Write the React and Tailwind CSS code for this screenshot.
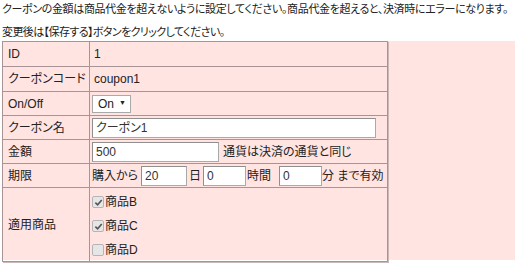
import React from 'react'

const font = { fontFamily: '"Liberation Sans", "Noto Sans CJK JP", sans-serif', fontFeatureSettings: '"palt"' }

const Check = ({ checked }) => (
  <span className="inline-flex items-center justify-center w-[12px] h-[12px] mr-[1px] border border-[#b5b5b5] bg-[#e6e6e6] rounded-[2px]">
    {checked && (
      <svg width="9" height="9" viewBox="0 0 10 10">
        <path d="M1.5 5.2 L4 7.6 L8.6 2.2" fill="none" stroke="#555" strokeWidth="1.8" />
      </svg>
    )}
  </span>
)

const Input = ({ value, w }) => (
  <span className={`inline-block h-[20px] leading-[18px] border border-[#a9a9a9] border-t-[#8f8f8f] border-l-[#8f8f8f] bg-white pl-[3px] text-[12px] text-[#333] align-middle ${w}`}>
    {value}
  </span>
)

const rows = [
  { label: 'ID', h: 'h-[25px]', value: <span className="pl-[2px]">1</span> },
  { label: 'クーポンコード', h: 'h-[25px]', value: <span className="pl-[2px]">coupon1</span> },
  {
    label: 'On/Off',
    h: 'h-[24px]',
    value: (
      <span className="inline-flex items-center h-[18px] border border-[#a9a9a9] bg-white pl-[5px] pr-[4px] gap-[5px] text-[12px]">
        On <span className="text-[7px]">▼</span>
      </span>
    ),
  },
  { label: 'クーポン名', h: 'h-[24px]', value: <Input value="クーポン1" w="w-[284px]" /> },
  {
    label: '金額',
    h: 'h-[24px]',
    value: (
      <span className="flex items-center gap-[4px]">
        <Input value="500" w="w-[127px]" />
        <span>通貨は決済の通貨と同じ</span>
      </span>
    ),
  },
  {
    label: '期限',
    h: 'h-[24px]',
    value: (
      <span className="flex items-center whitespace-nowrap">
        <span className="mr-[3px]">購入から</span>
        <Input value="20" w="w-[46px]" />
        <span className="mx-[2px]">日</span>
        <Input value="0" w="w-[43px]" />
        <span className="ml-[1px] mr-[8px]">時間</span>
        <Input value="0" w="w-[43px]" />
        <span>分 まで有効</span>
      </span>
    ),
  },
]

export default function App() {
  return (
    <div className="w-[518px] h-[265px] bg-white text-[12px] text-[#222]" style={font}>
      <p className="pl-[2px] pt-[2px] text-[11px] leading-[14px] whitespace-nowrap tracking-[-0.35px]">
        クーポンの金額は商品代金を超えないように設定してください。商品代金を超えると、決済時にエラーになります。
      </p>
      <p className="pl-[2px] mt-[9px] text-[11px] leading-[14px] whitespace-nowrap tracking-[-0.6px]">
        変更後は【保存する】ボタンをクリックしてください。
      </p>
      <div className="mt-[2px] ml-[2px] w-[513px] h-[219px] bg-[#ffe4e1]">
        <table className="w-[386px] border-collapse border border-[#a89494] shadow-[1px_1px_0_#cbb8b8]">
          <tbody>
            {rows.map((r) => (
              <tr key={r.label} className={r.h}>
                <td className="w-[87px] border border-[#a89494] pl-[5px] py-0 whitespace-nowrap">{r.label}</td>
                <td className="border border-[#a89494] pl-[2px] py-0">{r.value}</td>
              </tr>
            ))}
            <tr className="h-[70px]">
              <td className="w-[87px] border border-[#a89494] pl-[5px]">適用商品</td>
              <td className="border border-[#a89494] pl-[2px]">
                <div className="flex flex-col gap-[6px] pt-[5px] pb-[2px]">
                  <span className="flex items-center"><Check checked />商品B</span>
                  <span className="flex items-center"><Check checked />商品C</span>
                  <span className="flex items-center"><Check />商品D</span>
                </div>
              </td>
            </tr>
          </tbody>
        </table>
      </div>
    </div>
  )
}
